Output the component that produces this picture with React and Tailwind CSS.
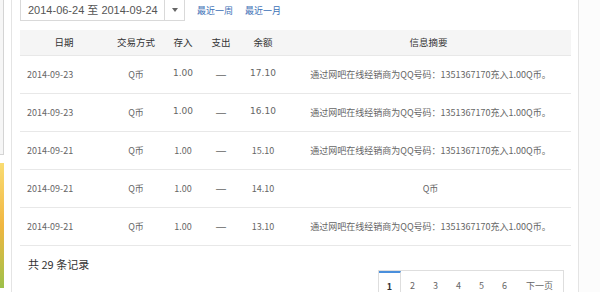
import React from "react";

const rows = [
  { date: "2014-09-23", type: "Q币", inAmt: "1.00", out: "—", bal: "17.10", note: "通过网吧在线经销商为QQ号码：1351367170充入1.00Q币。", wide: true },
  { date: "2014-09-23", type: "Q币", inAmt: "1.00", out: "—", bal: "16.10", note: "通过网吧在线经销商为QQ号码：1351367170充入1.00Q币。", wide: true },
  { date: "2014-09-21", type: "Q币", inAmt: "1.00", out: "—", bal: "15.10", note: "通过网吧在线经销商为QQ号码：1351367170充入1.00Q币。" },
  { date: "2014-09-21", type: "Q币", inAmt: "1.00", out: "—", bal: "14.10", note: "Q币" },
  { date: "2014-09-21", type: "Q币", inAmt: "1.00", out: "—", bal: "13.10", note: "通过网吧在线经销商为QQ号码：1351367170充入1.00Q币。" },
];

const cols = "grid grid-cols-[88px_56px_38px_38px_46px_1fr]";

export default function App() {
  return (
    <div className="flex h-[292px] w-[600px] overflow-hidden bg-white font-['Noto_Sans_CJK_SC',sans-serif] text-[#666]">
      {/* left strip */}
      <div className="flex w-[12px] shrink-0 flex-col border-r border-[#e4e4e4]">
        <div className="h-[155px] w-[4px] border-r border-b border-[#d4d4d4] bg-[#f6f6f6]" />
        <div className="mt-[8px] h-[125px] w-[4px] bg-gradient-to-b from-[#f9dc72] via-[#f0b640] to-[#9cc04a]" />
      </div>

      {/* main */}
      <div className="w-[567px] shrink-0 border-r border-[#e4e4e4] pl-[8px] pr-[7px]">
        <div className="flex items-center">
          <div className="-mt-px flex h-[22px] w-[165px] items-center border border-[#d9d9d9] text-[#555]">
            <span className="flex-1 pl-[7px] font-['Liberation_Sans','Noto_Sans_CJK_SC',sans-serif] text-[11px]">2014-06-24 至 2014-09-24</span>
            <span className="flex h-full w-[20px] items-center justify-center border-l border-[#d9d9d9]">
              <span className="h-0 w-0 border-x-[3.5px] border-t-[4px] border-x-transparent border-t-[#666]" />
            </span>
          </div>
          <a className="ml-[12px] text-[9px] text-[#3c6fb6]">最近一周</a>
          <a className="ml-[12px] text-[9px] text-[#3c6fb6]">最近一月</a>
        </div>

        <div className={`${cols} mt-[9px] h-[26px] items-center border-b border-[#e8e8e8] bg-[#f5f5f5] text-center text-[9.5px] text-[#333]`}>
          <div>日期</div>
          <div>交易方式</div>
          <div>存入</div>
          <div>支出</div>
          <div>余额</div>
          <div>信息摘要</div>
        </div>

        {rows.map((r, i) => (
          <div key={i} className={`${cols} h-[38px] items-center border-b border-[#e8e8e8] text-center text-[9px]`}>
            <div className="pl-[7px] text-left">{r.date}</div>
            <div>{r.type}</div>
            <div className={r.wide ? "-mt-[2px] font-['DejaVu_Sans',sans-serif]" : ""}>{r.inAmt}</div>
            <div className="font-['Liberation_Sans',sans-serif] text-[10px]">{r.out}</div>
            <div className={r.wide ? "-mt-[2px] font-['DejaVu_Sans',sans-serif]" : ""}>{r.bal}</div>
            <div className="pl-[4px]">{r.note}</div>
          </div>
        ))}

        <div className="flex items-start justify-between">
          <div className="mt-[10px] pl-[8px] text-[11px] text-[#333]">共 29 条记录</div>
          <div className="mt-[24px] mr-[7px] flex h-[32px] border border-[#dedede] text-[9px] text-[#666]">
            <span className="flex w-[22px] items-center justify-center border-t-2 border-r border-t-[#4a8fdc] border-r-[#dedede] font-bold text-[#333]">1</span>
            {["2", "3", "4", "5", "6"].map((n) => (
              <span key={n} className="flex w-[23px] items-center justify-center">{n}</span>
            ))}
            <span className="flex w-[47px] items-center justify-center">下一页</span>
          </div>
        </div>
      </div>

      {/* right strip */}
      <div className="flex-1 bg-[#fcfcfc]" />
    </div>
  );
}
